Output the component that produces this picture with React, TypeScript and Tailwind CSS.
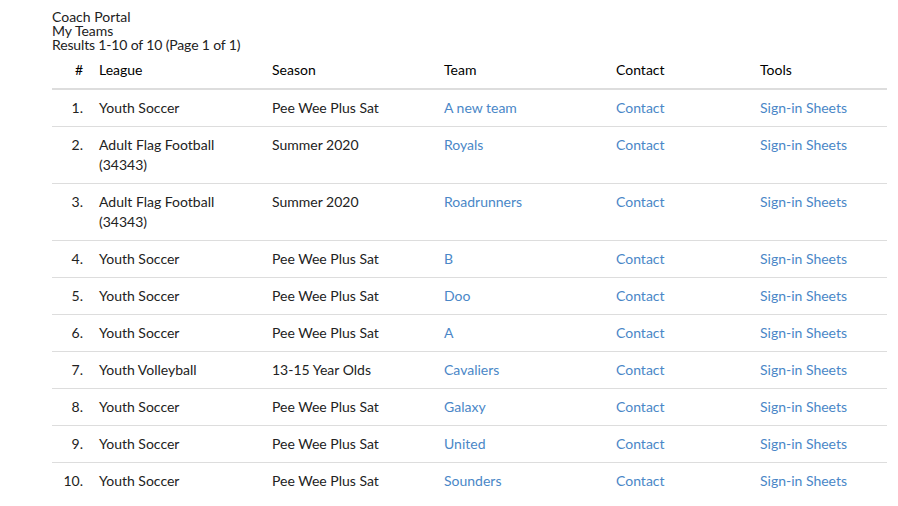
const rows = [
  { n: 1, league: "Youth Soccer", season: "Pee Wee Plus Sat", team: "A new team" },
  { n: 2, league: "Adult Flag Football (34343)", season: "Summer 2020", team: "Royals" },
  { n: 3, league: "Adult Flag Football (34343)", season: "Summer 2020", team: "Roadrunners" },
  { n: 4, league: "Youth Soccer", season: "Pee Wee Plus Sat", team: "B" },
  { n: 5, league: "Youth Soccer", season: "Pee Wee Plus Sat", team: "Doo" },
  { n: 6, league: "Youth Soccer", season: "Pee Wee Plus Sat", team: "A" },
  { n: 7, league: "Youth Volleyball", season: "13-15 Year Olds", team: "Cavaliers" },
  { n: 8, league: "Youth Soccer", season: "Pee Wee Plus Sat", team: "Galaxy" },
  { n: 9, league: "Youth Soccer", season: "Pee Wee Plus Sat", team: "United" },
  { n: 10, league: "Youth Soccer", season: "Pee Wee Plus Sat", team: "Sounders" },
]

export default function App() {
  return (
    <div className="bg-white min-h-[506px] pl-[52px] pr-[11px] pt-[10px] text-[14px] text-[#222] font-['Lato',sans-serif]">
      <div className="leading-[14px]">
        <div>Coach Portal</div>
        <div>My Teams</div>
        <div className="tracking-[-0.15px]">Results 1-10 of 10 (Page 1 of 1)</div>
      </div>
      <table className="w-[835px] border-collapse leading-[20px] table-fixed">
        <colgroup>
          <col className="w-[39px]" />
          <col className="w-[173px]" />
          <col className="w-[172px]" />
          <col className="w-[172px]" />
          <col className="w-[144px]" />
          <col className="w-[135px]" />
        </colgroup>
        <thead>
          <tr className="border-b-2 border-[#ddd] text-black">
            <th className="p-2 text-right font-normal">#</th>
            <th className="p-2 text-left font-normal">League</th>
            <th className="p-2 text-left font-normal">Season</th>
            <th className="p-2 text-left font-normal">Team</th>
            <th className="p-2 text-left font-normal">Contact</th>
            <th className="p-2 text-left font-normal">Tools</th>
          </tr>
        </thead>
        <tbody>
          {rows.map(r => (
            <tr key={r.n} className="border-t border-[#ddd] align-top first:border-t-0">
              <td className="p-2 text-right">{r.n}.</td>
              <td className="p-2">{r.league}</td>
              <td className="p-2">{r.season}</td>
              <td className="p-2 text-[#4a87c7]">{r.team}</td>
              <td className="p-2 text-[#4a87c7]">Contact</td>
              <td className="p-2 text-[#4a87c7]">Sign-in Sheets</td>
            </tr>
          ))}
        </tbody>
      </table>
    </div>
  )
}
